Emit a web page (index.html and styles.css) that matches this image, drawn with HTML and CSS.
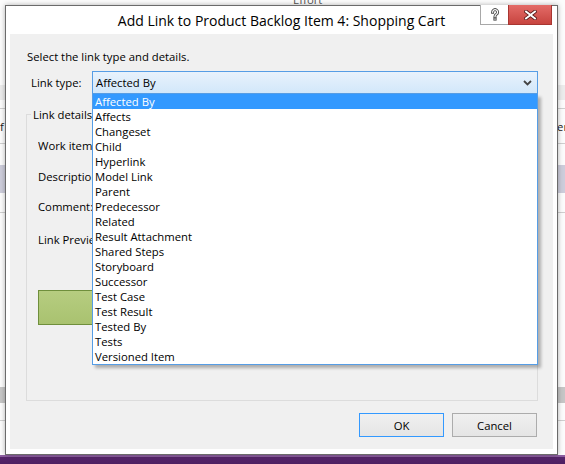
FILE: index.html
```html
<!DOCTYPE html>
<html>
<head>
<meta charset="utf-8">
<link rel="stylesheet" href="styles.css">
</head>
<body>
<div class="desk">
  <div class="app">
    <div class="hdr"><span class="hdr-text">Effort</span></div>
    <div class="band1"></div>
    <div class="gap8"></div>
    <div class="hline"></div>
    <div class="trow"><span class="frag-l">f</span><span class="frag-r">Owner</span></div>
    <div class="hline"></div>
    <div class="gap21"></div>
    <div class="selrow"></div>
    <div class="gap19"></div>
    <div class="hline"></div>
    <div class="gap174"></div>
    <div class="band2"></div>
    <div class="gap17"></div>
    <div class="hline"></div>
    <div class="rest"></div>
  </div>
  <div class="taskbar"></div>

  <div class="dialog">
    <div class="titlebar">
      <div></div>
      <div class="title">Add Link to Product Backlog Item 4: Shopping Cart</div>
      <div class="caption">
        <div class="cbtn help">
          <svg width="10" height="13" viewBox="0 0 10 13">
            <path d="M2.6 4.2 A2.5 2.5 0 1 1 6.4 6.3 C5.3 6.9 5 7.4 5 8.6" fill="none" stroke="#4a4a4a" stroke-width="3" stroke-linecap="square"/>
            <rect x="3.4" y="9.6" width="3.2" height="3" fill="#4a4a4a"/>
            <path d="M2.6 4.2 A2.5 2.5 0 1 1 6.4 6.3 C5.3 6.9 5 7.4 5 8.6" fill="none" stroke="#fff" stroke-width="1.2" stroke-linecap="square"/>
            <rect x="4.4" y="10.5" width="1.2" height="1.2" fill="#fff"/>
          </svg>
        </div>
        <div class="cbtn close">
          <svg width="13" height="10" viewBox="0 0 13 10">
            <path d="M2 1.5 L11 8.5 M11 1.5 L2 8.5" stroke="#5a1c1c" stroke-width="3.6" stroke-linecap="square"/>
            <path d="M2 1.5 L11 8.5 M11 1.5 L2 8.5" stroke="#fff" stroke-width="1.9" stroke-linecap="square"/>
          </svg>
        </div>
      </div>
    </div>
    <div class="client">
      <div class="intro">Select the link type and details.</div>
      <div class="typerow">
        <span class="lbl">Link type:</span>
        <div class="combo-wrap">
          <div class="combo">
            <span class="combo-text">Affected By</span>
            <svg class="chev" width="9" height="6" viewBox="0 0 9 6"><path d="M1 1 L4.5 4.5 L8 1" fill="none" stroke="#444" stroke-width="1.8"/></svg>
          </div>
          <ul class="list">
            <li class="sel">Affected By</li>
            <li>Affects</li>
            <li>Changeset</li>
            <li>Child</li>
            <li>Hyperlink</li>
            <li>Model Link</li>
            <li>Parent</li>
            <li>Predecessor</li>
            <li>Related</li>
            <li>Result Attachment</li>
            <li>Shared Steps</li>
            <li>Storyboard</li>
            <li>Successor</li>
            <li>Test Case</li>
            <li>Test Result</li>
            <li>Tested By</li>
            <li>Tests</li>
            <li>Versioned Item</li>
          </ul>
        </div>
      </div>
      <fieldset class="group">
        <legend>Link details</legend>
        <div class="fields">
          <div class="field f1">Work item:</div>
          <div class="field f2">Description:</div>
          <div class="field f3">Comment:</div>
          <div class="field f4">Link Preview:</div>
        </div>
        <div class="preview-box"></div>
      </fieldset>
      <div class="buttons">
        <button class="btn default">OK</button>
        <button class="btn">Cancel</button>
      </div>
    </div>
  </div>
</div>
</body>
</html>
```

FILE: styles.css
```css
* { box-sizing: border-box; }
html, body { margin: 0; padding: 0; }
body {
  width: 565px;
  height: 464px;
  overflow: hidden;
  font-family: "Open Sans", "Noto Sans", sans-serif;
  font-size: 11.3px;
  color: #000;
}
.desk {
  position: relative;
  width: 565px;
  height: 464px;
  overflow: hidden;
  background: #fcfcfc;
}

/* background application */
.app { display: flex; flex-direction: column; height: 455px; }
.hdr { height: 85px; padding-left: 293px; }
.hdr-text { display: block; margin-top: -8px; line-height: 15px; color: #555; }
.band1 { height: 15px; background: #ececec; }
.gap8 { height: 8px; }
.hline { height: 1px; background: #cfcfcf; }
.trow {
  height: 34px;
  display: flex;
  justify-content: space-between;
  align-items: center;
  color: #222;
}
.frag-l { margin-left: 0; }
.frag-r { margin-right: -3px; }
.gap21 { height: 21px; }
.selrow { height: 28px; background: #cdcddb; }
.gap19 { height: 19px; }
.gap174 { height: 174px; }
.band2 { height: 16px; background: #c6c6c6; }
.gap17 { height: 17px; }
.rest { flex: 1; }
.taskbar {
  height: 9px;
  background: linear-gradient(#8d5ea0 0, #8d5ea0 2px, #57256b 2px, #4d1f62 100%);
}

/* dialog */
.dialog {
  position: absolute;
  left: 5px;
  top: 5px;
  width: 553px;
  height: 450px;
  border: 1px solid #6b6b6b;
  background: #fff;
  padding: 0 4px 5px 4px;
  display: flex;
  flex-direction: column;
  box-shadow: 0 0 5px rgba(0, 0, 0, 0.3);
}
.titlebar {
  height: 28px;
  display: grid;
  grid-template-columns: 1fr auto 1fr;
  align-items: center;
}
.title {
  font-size: 14px;
  line-height: 20px;
  color: #000;
  white-space: nowrap;
  margin-top: 1px;
}
.caption {
  justify-self: end;
  align-self: start;
  display: flex;
  margin-top: -1px;
  margin-right: 1px;
}
.cbtn {
  height: 20px;
  display: flex;
  align-items: center;
  justify-content: center;
}
.help {
  width: 28px;
  background: #fff;
  border: 1px solid #a8a8a8;
  border-top: none;
  border-right: none;
}
.close {
  width: 44px;
  background: linear-gradient(#e46c68, #c7443f);
  border: 1px solid #a83631;
  border-top: none;
}
.client {
  height: 415px;
  background: #f0f0f0;
  padding: 0 15px 0 17px;
  display: flex;
  flex-direction: column;
}
.intro { margin-top: 15px; line-height: 15px; }
.typerow {
  margin-top: 7px;
  display: flex;
  align-items: center;
}
.lbl { width: 61px; margin-left: 4px; line-height: 15px; }
.combo-wrap { position: relative; width: 446px; }
.combo {
  height: 23px;
  border: 1px solid #569de5;
  background: linear-gradient(#e8f2fc, #d2e7fa);
  display: flex;
  align-items: center;
  justify-content: space-between;
  padding: 0 5px 0 3px;
}
.combo-text { line-height: 15px; }
.chev { display: block; }
.list {
  position: absolute;
  left: 0;
  top: 100%;
  width: 446px;
  margin: 0;
  padding: 0;
  list-style: none;
  background: #fff;
  border: 1px solid #569de5;
  border-top: none;
  box-shadow: 3px 3px 3px rgba(0, 0, 0, 0.28);
  z-index: 2;
}
.list li {
  height: 15px;
  line-height: 15px;
  padding-left: 2px;
  white-space: nowrap;
}
.list li.sel { background: #3399ff; color: #fff; }

.group {
  margin: 12.5px 0 0 -1px;
  width: 512px;
  height: 294.5px;
  border: 1px solid #dcdcdc;
  padding: 0 0 0 4px;
  display: flex;
  flex-direction: column;
  align-items: flex-start;
}
.group legend {
  padding: 0 2px;
  line-height: 15px;
  margin-left: 0;
}
.fields {
  margin-left: 7px;
  width: 54px;
  overflow: hidden;
  display: flex;
  flex-direction: column;
}
.field {
  line-height: 15px;
  white-space: nowrap;
}
.f1 { margin-top: 16px; height: 31px; }
.f2 { height: 30px; }
.f3 { height: 33px; }
.f4 { height: 15px; }
.preview-box {
  margin-left: 7px;
  margin-top: 43.5px;
  width: 210px;
  height: 35px;
  border: 1px solid #6f8f3c;
  background: linear-gradient(#b6cd80, #a9c270);
}
.buttons {
  margin-top: 12px;
  display: flex;
  justify-content: flex-end;
  gap: 8px;
  margin-right: 1px;
}
.btn {
  width: 85px;
  height: 24px;
  border: 1px solid #acacac;
  background: linear-gradient(#f0f0f0, #e5e5e5);
  font-family: "Open Sans", "Noto Sans", sans-serif;
  font-size: 11.3px;
  color: #000;
  padding: 0;
  margin: 0;
}
.btn.default { border-color: #3399ff; }
```
